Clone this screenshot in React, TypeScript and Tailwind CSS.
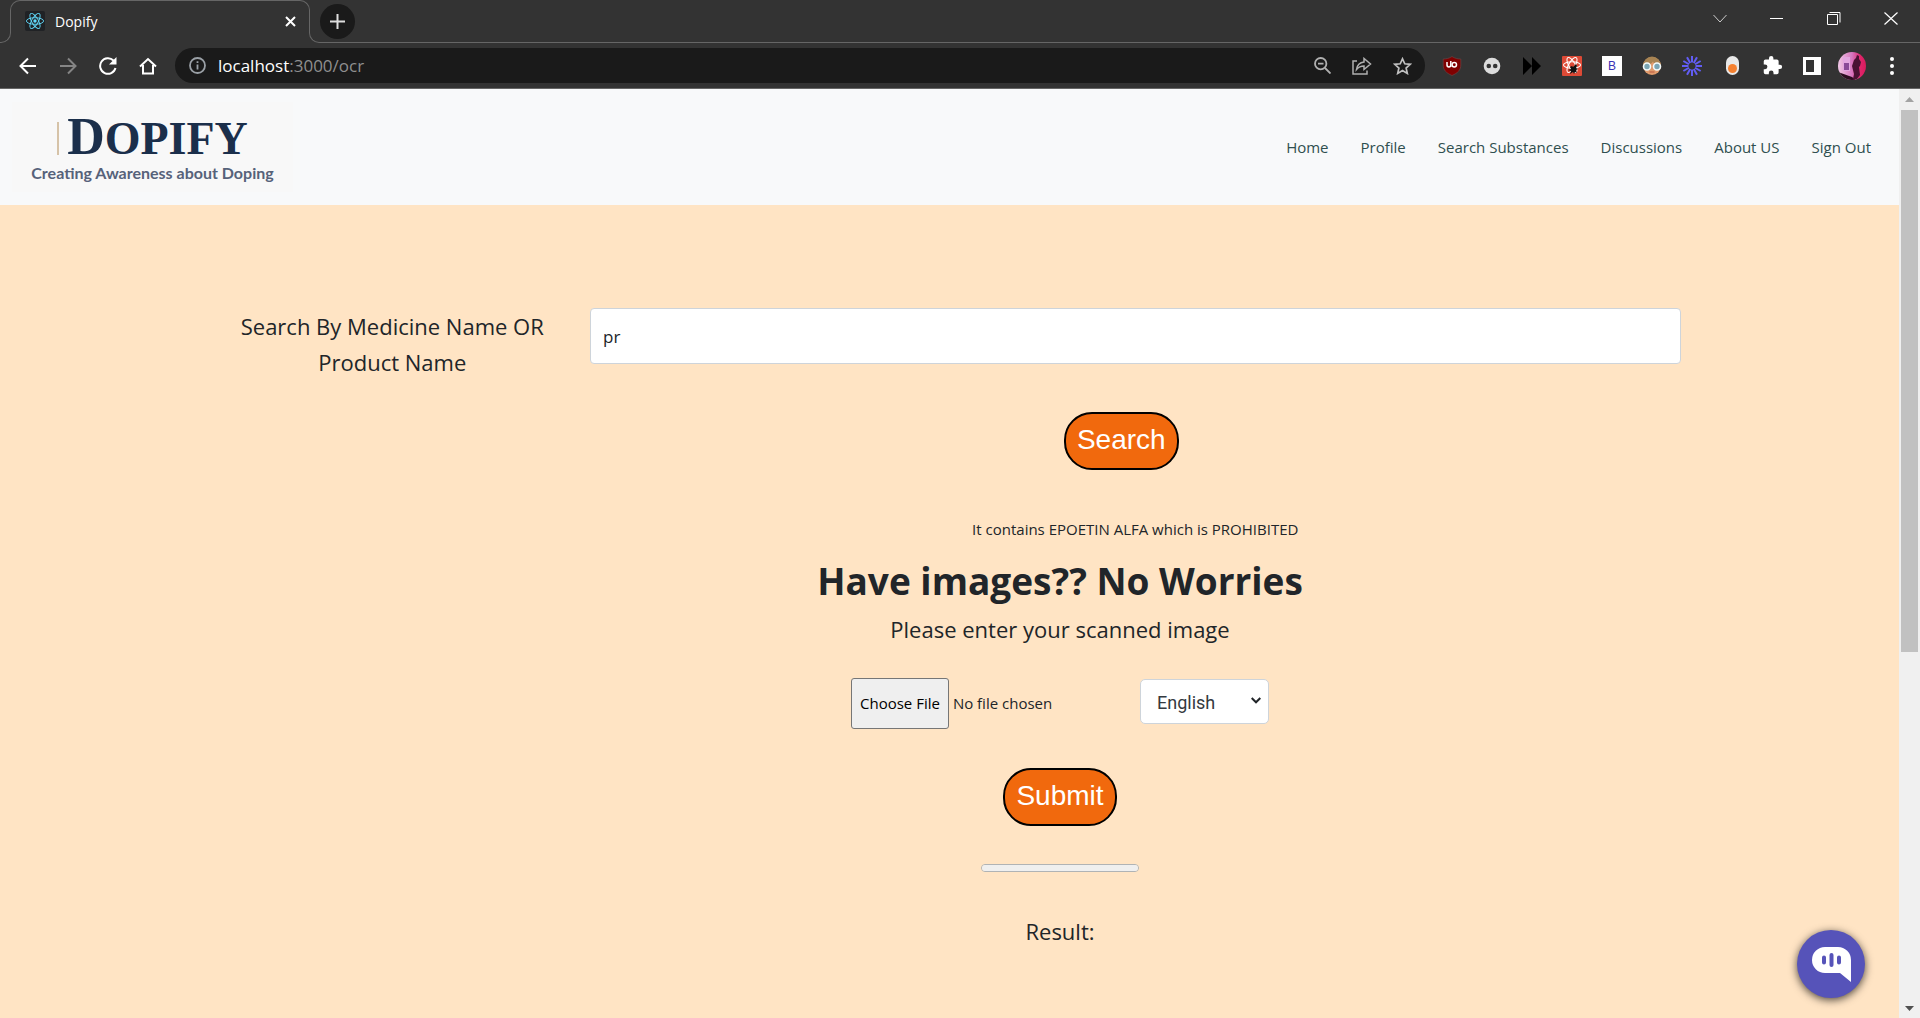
import React from "react";

const navLinks = ["Home", "Profile", "Search Substances", "Discussions", "About US", "Sign Out"];

function ReactLogo() {
  return (
    <svg width="20" height="20" viewBox="0 0 20 20" fill="none" aria-hidden="true">
      <rect width="20" height="20" rx="2" fill="#202225" />
      <g stroke="#61dafb" strokeWidth="0.9">
        <ellipse cx="10" cy="10" rx="8.6" ry="3.3" />
        <ellipse cx="10" cy="10" rx="8.6" ry="3.3" transform="rotate(60 10 10)" />
        <ellipse cx="10" cy="10" rx="8.6" ry="3.3" transform="rotate(120 10 10)" />
      </g>
      <circle cx="10" cy="10" r="1.7" fill="#61dafb" />
    </svg>
  );
}

function WindowButton({ label, children }: { label: string; children: React.ReactNode }) {
  return (
    <button aria-label={label} className="flex h-[37px] w-[57px] items-center justify-center">
      {children}
    </button>
  );
}

function TabStrip() {
  return (
    <div className="flex h-[43px] items-end">
      <div className="h-[22px] w-[11px] rounded-br-[10px] border-r border-b border-[#666666]" />
      <div className="relative flex h-[43px] w-[298px] items-center pr-[11px] pb-[1px] pl-[14px]">
        <span className="pointer-events-none absolute inset-x-[-1px] top-0 h-[22px] rounded-t-[10px] border-x border-t border-[#666666]" />
        <ReactLogo />
        <span className="ml-[10px] flex-1 text-[14px] text-white">Dopify</span>
        <button aria-label="Close tab" className="flex h-4 w-4 items-center justify-center">
          <svg width="11" height="11" viewBox="0 0 11 11" stroke="#fff" strokeWidth="2">
            <path d="M1 1l9 9M10 1l-9 9" />
          </svg>
        </button>
      </div>
      <div className="relative flex h-[43px] flex-1 items-start justify-between pr-px pl-[11px]">
        <span className="pointer-events-none absolute inset-x-0 bottom-0 h-[22px] rounded-bl-[10px] border-b border-l border-[#666666]" />
        <button aria-label="New tab" className="mt-1 flex h-[35px] w-[35px] items-center justify-center rounded-full bg-[#1a1a1a]">
          <svg width="15" height="15" viewBox="0 0 15 15" stroke="#dedede" strokeWidth="2">
            <path d="M7.5 0v15M0 7.5h15" />
          </svg>
        </button>
        <div className="flex">
          <WindowButton label="Search tabs">
            <svg width="14" height="9" viewBox="0 0 14 9" fill="none" stroke="#ccc"><path d="M.5 1L7 8l6.5-7" /></svg>
          </WindowButton>
          <WindowButton label="Minimize">
            <svg width="13" height="2" viewBox="0 0 13 2"><path d="M0 .5h13" stroke="#fff" /></svg>
          </WindowButton>
          <WindowButton label="Restore">
            <svg width="14" height="13" viewBox="0 0 14 13" fill="none" stroke="#fff"><path d="M.5 2.5h10v10H.5zM2.5 .5h10.5v10" /></svg>
          </WindowButton>
          <WindowButton label="Close">
            <svg width="14" height="13" viewBox="0 0 14 13" stroke="#fff" strokeWidth="1.2"><path d="M.5.5l13 12M13.5.5l-13 12" /></svg>
          </WindowButton>
        </div>
      </div>
    </div>
  );
}

function Tool({ label, children }: { label: string; children: React.ReactNode }) {
  return (
    <button aria-label={label} className="flex h-[35px] w-10 shrink-0 items-center justify-center">
      {children}
    </button>
  );
}

function Toolbar() {
  return (
    <div className="flex h-[46px] items-center border-b border-[#666666] px-2">
      <Tool label="Back">
        <svg width="18" height="18" viewBox="0 0 18 18" fill="none" stroke="#fff" strokeWidth="2"><path d="M17 9H2M9 1.5L1.5 9 9 16.5" /></svg>
      </Tool>
      <Tool label="Forward">
        <svg width="18" height="18" viewBox="0 0 18 18" fill="none" stroke="#858585" strokeWidth="2"><path d="M1 9h15M9 1.5L16.5 9 9 16.5" /></svg>
      </Tool>
      <Tool label="Reload">
        <svg width="18" height="18" viewBox="0 0 18 18" fill="none" stroke="#fff" strokeWidth="2"><path d="M16.5 11A7.800 7.800 0 1 1 14.5 3.5l1.5 1.5" /><path d="M17.5 0v7.5H10z" fill="#fff" stroke="none" /></svg>
      </Tool>
      <Tool label="Home page">
        <svg width="18" height="18" viewBox="0 0 18 18" fill="none" stroke="#fff" strokeWidth="2"><path d="M1 9.5L9 2l8 7.5M4 8v8.500h10V8" /></svg>
      </Tool>
      <div className="ml-[7px] flex h-[35px] flex-1 items-center rounded-full bg-[#1a1a1a] pr-[3px] pl-[14px]">
        <svg width="17" height="17" viewBox="0 0 17 17" fill="none" stroke="#9aa0a6" strokeWidth="1.8" aria-hidden="true">
          <circle cx="8.5" cy="8.5" r="7.5" /><path d="M8.5 7.5v5M8.5 4.2v1.8" />
        </svg>
        <span className="ml-3 flex-1 text-[17px] text-[#8f8f8f]"><span className="text-white">localhost</span>:3000/ocr</span>
        <Tool label="Zoom">
          <svg width="17" height="17" viewBox="0 0 17 17" fill="none" stroke="#b0b0b0" strokeWidth="1.8"><circle cx="6.7" cy="6.7" r="5.7" /><path d="M11 11l5.5 5.5M4 6.7h5.5" /></svg>
        </Tool>
        <Tool label="Share">
          <svg width="20" height="18" viewBox="0 0 20 18" fill="none" stroke="#b0b0b0" strokeWidth="1.5"><path d="M5 4H1v13h14v-3.5M12 1.5V5C7 5.5 5 9 4.5 12.5 6.5 10 9 9 12 9v3.5L18.5 7z" /></svg>
        </Tool>
        <Tool label="Bookmark">
          <svg width="19" height="18" viewBox="0 0 19 18" fill="none" stroke="#c0c0c0" strokeWidth="1.7"><path d="M9.5 1.8l2.3 5 5.4.5-4.1 3.7 1.2 5.4-4.800-2.900-4.800 2.900 1.200-5.400L1.800 7.300l5.400-.5z" /></svg>
        </Tool>
      </div>
      <div className="ml-[7px] flex items-center">
        <Tool label="uBlock Origin">
          <svg width="20" height="20" viewBox="0 0 20 20"><path d="M10 .5c3 2 6 2.5 8.8 2.5V9c0 5-3 8-8.8 10.5C4.2 17 1.2 14 1.2 9V3C4 3 7 2.5 10 .5z" fill="#800000" stroke="#6b4a4a" strokeWidth=".6" /><path d="M5 6v3a1.900 1.900 0 0 0 3.800 0V6M8.800 5v6" fill="none" stroke="#fff" strokeWidth="1.5" /><circle cx="12.3" cy="8.7" r="2.2" fill="none" stroke="#fff" strokeWidth="1.5" /></svg>
        </Tool>
        <Tool label="Mask">
          <svg width="18" height="18" viewBox="0 0 18 18"><circle cx="9" cy="9" r="8.3" fill="#dcdcdc" /><circle cx="5.8" cy="9" r="2.3" fill="#333" /><circle cx="12.2" cy="9" r="2.3" fill="#333" /></svg>
        </Tool>
        <Tool label="Fast forward">
          <svg width="18" height="18" viewBox="0 0 18 18"><path d="M0 0l9 9-9 9zM9 0l9 9-9 9z" fill="#000" /></svg>
        </Tool>
        <Tool label="React developer tools">
          <svg width="20" height="20" viewBox="0 0 20 20" fill="none"><rect width="20" height="20" rx="1" fill="#dd4a36" /><g stroke="#fff" strokeWidth="1.1"><ellipse cx="10" cy="9" rx="8.5" ry="3.2" /><ellipse cx="10" cy="9" rx="8.5" ry="3.2" transform="rotate(60 10 9)" /><ellipse cx="10" cy="9" rx="8.5" ry="3.2" transform="rotate(120 10 9)" /></g><path d="M8 11l2-1 1 1 3-3 1 2-1 2 2 1-2 1 1 3-2-1-1 2-1-2-3 2 1-3-3-1 3-1z" fill="#111" /></svg>
        </Tool>
        <Tool label="Bootstrap">
          <span className="flex h-5 w-5 items-center justify-center bg-white font-['Liberation_Sans',sans-serif] text-[12px] text-[#3a32b5]">B</span>
        </Tool>
        <Tool label="Glasses">
          <svg width="20" height="20" viewBox="0 0 20 20"><circle cx="10" cy="10" r="9" fill="#e09b6c" /><path d="M1 9.5a9 9 0 0 1 18 0c-4 0-7-1-8-4-2 3-6 4-10 4z" fill="#a88453" /><g fill="#7ba6b4" stroke="#f3fafa" strokeWidth="1.6"><circle cx="5" cy="10.5" r="3.5" /><circle cx="15" cy="10.5" r="3.5" /></g><path d="M7.5 16h5" stroke="#b9573f" /></svg>
        </Tool>
        <Tool label="Loom">
          <svg width="20" height="20" viewBox="0 0 20 20" stroke="#625df5" strokeWidth="2"><path d="M10 0v6.5M10 13.5V20M0 10h6.5M13.5 10H20M5 1.34l3.25 5.63M11.75 13.03L15 18.66M1.34 5l5.63 3.25M13.03 11.75L18.66 15M1.34 15l5.63-3.25M13.03 8.25L18.66 5M5 18.66l3.25-5.63M11.75 6.97L15 1.34" /></svg>
        </Tool>
        <Tool label="Toggle">
          <svg width="13" height="19" viewBox="0 0 13 19"><rect width="13" height="19" rx="6.5" fill="#e8e8e8" /><circle cx="6.5" cy="12.5" r="4.5" fill="#f5802f" /></svg>
        </Tool>
        <Tool label="Extensions">
          <svg width="21" height="21" viewBox="0 0 24 24" fill="#fff"><path d="M20.5 11H19V7a2 2 0 0 0-2-2h-4V3.5a2.5 2.5 0 0 0-5 0V5H4a2 2 0 0 0-2 2v3.8h1.5a2.7 2.7 0 0 1 0 5.400H2V20a2 2 0 0 0 2 2h3.800v-1.500a2.700 2.700 0 0 1 5.400 0V22H17a2 2 0 0 0 2-2v-4h1.500a2.500 2.500 0 0 0 0-5z" /></svg>
        </Tool>
        <Tool label="Side panel">
          <svg width="18" height="18" viewBox="0 0 18 18"><rect width="18" height="18" fill="#fff" /><path d="M3 3h8v12H3z" fill="#333" /></svg>
        </Tool>
        <Tool label="Account">
          <svg width="28" height="28" viewBox="0 0 28 28">
            <defs>
              <clipPath id="avatar"><circle cx="14" cy="14" r="14" /></clipPath>
              <linearGradient id="wall"><stop offset="0" stopColor="#f0c8e6" /><stop offset=".5" stopColor="#d676be" /><stop offset=".8" stopColor="#e0246a" /><stop offset="1" stopColor="#d81b5c" /></linearGradient>
            </defs>
            <g clipPath="url(#avatar)">
              <path d="M0 0h28v28H0z" fill="url(#wall)" />
              <path d="M0 20l14 5 4 3H0z" fill="#2c0d20" />
              <path d="M5 5h7v14H5z" fill="#e3a6e0" />
              <path d="M6 11h5v7H6z" fill="#8a4a98" />
              <path d="M19 3l2 1v3l2 3-1 4-1 1 1 8-3 4h-4l1-5-2-8 2-6 2-2z" fill="#4a1233" />
            </g>
          </svg>
        </Tool>
        <Tool label="Menu">
          <svg width="4" height="18" viewBox="0 0 4 18" fill="#fff"><circle cx="2" cy="2" r="2" /><circle cx="2" cy="9" r="2" /><circle cx="2" cy="16" r="2" /></svg>
        </Tool>
      </div>
    </div>
  );
}

function SiteHeader() {
  return (
    <header className="flex h-[116px] items-center justify-between bg-[#f8f9fa] pr-7 pl-3">
      <a href="#home" className="flex h-[90px] w-[281px] flex-col items-center bg-[#f8f8f8] pt-[14px]">
        <span className="flex h-[44px] items-center gap-2">
          <span className="h-[33px] w-[2px] bg-[#d6c3a8]" />
          <span className="font-['Liberation_Serif',serif] text-[46px] leading-[44px] font-bold text-[#1b2f4b]"><span className="text-[52px]">D</span>OPIFY</span>
        </span>
        <span className="mt-px font-[Lato,sans-serif] text-[16px] leading-[24px] font-bold text-[#56627a]">Creating Awareness about Doping</span>
      </a>
      <nav className="flex gap-8 text-[15px] text-[#2f4f4f]">
        {navLinks.map((label) => (
          <a key={label} href={"#" + label.toLowerCase().replace(" ", "-")}>{label}</a>
        ))}
      </nav>
    </header>
  );
}

function PillButton({ children }: { children: React.ReactNode }) {
  return (
    <button className="h-[58px] rounded-[28px] border-2 border-black bg-[#f1690d] px-[11px] pb-0.5 font-['Liberation_Sans',sans-serif] text-[28px] leading-8 text-white">
      {children}
    </button>
  );
}

function MedicineSearch() {
  return (
    <section className="grid grid-cols-4">
      <label htmlFor="medicine" className="px-3 text-center text-[22px] leading-9">Search By Medicine Name OR Product Name</label>
      <div className="col-span-3 flex flex-col items-center px-3">
        <input id="medicine" defaultValue="pr" className="h-[56px] w-full rounded border border-[#ced4da] bg-white px-3 text-[17px]" />
        <div className="mt-12 pr-7">
          <PillButton>Search</PillButton>
        </div>
        <p className="mt-[47px] text-[15px] leading-6">It contains EPOETIN ALFA which is PROHIBITED</p>
      </div>
    </section>
  );
}

function ImageScan() {
  return (
    <section className="flex flex-col items-center pt-4 pl-[221px]">
      <h1 className="text-[37px] leading-[48px] font-bold">Have images?? No Worries</h1>
      <h2 className="mt-1.5 text-[22px] leading-9">Please enter your scanned image</h2>
      <div className="mt-[31px] flex">
        <input
          type="file"
          aria-label="Scanned image"
          className="w-[289px] text-[15px] file:mr-1 file:h-[51px] file:rounded-[3px] file:border file:border-solid file:border-[#767676] file:bg-[#efefef] file:px-2 file:text-black"
        />
        <div className="relative mt-px h-[45px] w-[129px]">
          <select aria-label="Language" className="h-full w-full appearance-none rounded-[5px] border border-[#ced4da] bg-white pt-0.5 pl-4 font-[Roboto,sans-serif] text-[18px] text-[#343a40]">
            <option>English</option>
          </select>
          <svg className="pointer-events-none absolute top-[18px] right-2" width="10" height="7" viewBox="0 0 10 7" fill="none" stroke="#212529" strokeWidth="2" aria-hidden="true"><path d="M.7 1L5 5.3 9.3 1" /></svg>
        </div>
      </div>
      <div className="mt-[39px]">
        <PillButton>Submit</PillButton>
      </div>
      <progress
        aria-label="Scan progress"
        value={0}
        max={100}
        className="mt-[38px] h-2 w-[158px] appearance-none overflow-hidden rounded-full border border-[#b0b3b5] bg-[#efefef] [&::-webkit-progress-bar]:bg-[#efefef]"
      />
      <p className="mt-[41px] text-[22px] leading-9">Result:</p>
    </section>
  );
}

function ScrollBar() {
  return (
    <div className="flex w-[21px] shrink-0 flex-col items-center bg-[#f0f0f0]" aria-hidden="true">
      <div className="flex h-[21px] items-center"><svg width="9" height="5" viewBox="0 0 9 5"><path d="M0 5h9L4.5 0z" fill="#a3a3a3" /></svg></div>
      <div className="flex w-[17px] flex-1 flex-col">
        <div className="h-[61%] bg-[#c1c1c1]" />
      </div>
      <div className="flex h-[19px] items-center"><svg width="9" height="5" viewBox="0 0 9 5"><path d="M0 0h9L4.5 5z" fill="#505050" /></svg></div>
    </div>
  );
}

export default function App() {
  return (
    <div className="flex min-h-screen flex-col bg-[#333333] font-['Open_Sans',sans-serif]">
      <TabStrip />
      <Toolbar />
      <div className="flex flex-1">
        <div className="relative flex min-w-0 flex-1 flex-col">
          <SiteHeader />
          <main className="flex-1 bg-[#ffe4c4] pt-[103px] text-[#212529]">
            <div className="mx-auto w-full max-w-[1486px]">
              <MedicineSearch />
              <ImageScan />
            </div>
          </main>
          <button aria-label="Open chat" className="absolute right-[34px] bottom-5 flex h-[68px] w-[68px] items-center justify-center rounded-full bg-[#5653b9] shadow-[0_2px_8px_rgba(0,0,0,0.7)]">
            <svg width="39" height="35" viewBox="0 0 39 35"><path d="M13 0h13a13 13 0 0 1 13 13v22l-11-9H13A13 13 0 0 1 13 0z" fill="#fff" /><path d="M12 10.5v5M19.5 8v10M27 10.5v5" stroke="#5653b9" strokeWidth="4" strokeLinecap="round" /></svg>
          </button>
        </div>
        <ScrollBar />
      </div>
    </div>
  );
}
